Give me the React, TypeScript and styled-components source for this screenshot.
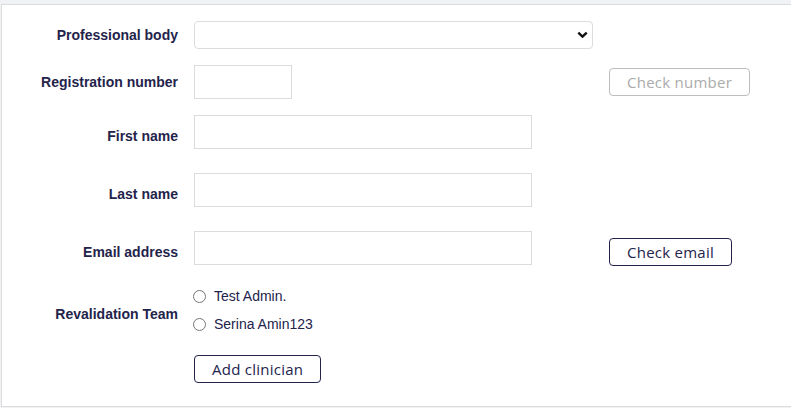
import React from "react";
import styled, { createGlobalStyle } from "styled-components";

const Global = createGlobalStyle`
  html, body { margin: 0; padding: 0; background: #f0f2f5; }
  body { font-family: "Liberation Sans", Arial, sans-serif; }
`;

const Card = styled.div`
  margin: 4px 0 0 1px;
  width: 820px;
  height: 403px;
  box-sizing: border-box;
  background: #fff;
  border: 1px solid #dcdcdc;
  padding: 16px 0 0 0;
`;

const Form = styled.div`
  display: grid;
  grid-template-columns: 176px 399px auto;
  column-gap: 16px;
  row-gap: 16px;
  align-items: center;
`;

const Label = styled.label`
  text-align: right;
  font-weight: bold;
  font-size: 14px;
  color: #23234b;
  line-height: 16px;
`;

const Cell = styled.div<{ $pad?: number }>`
  display: flex;
  align-items: flex-start;
  padding-bottom: ${(p) => p.$pad ?? 0}px;
`;

const SelectWrap = styled.div`
  position: relative;
  width: 399px;
  height: 28px;
`;

const Select = styled.select`
  appearance: none;
  width: 100%;
  height: 28px;
  box-sizing: border-box;
  border: 1px solid #dcdcdc;
  border-radius: 4px;
  background: #fff;
  font-family: "Liberation Sans", Arial, sans-serif;
  font-size: 14px;
  outline: none;
`;

const Chevron = styled.svg`
  position: absolute;
  right: 5px;
  top: 10px;
  pointer-events: none;
`;

const Input = styled.input<{ $w: number }>`
  width: ${(p) => p.$w}px;
  height: 34px;
  box-sizing: border-box;
  border: 1px solid #dcdcdc;
  border-radius: 0;
  background: #fff;
  font-family: "Liberation Sans", Arial, sans-serif;
  font-size: 14px;
  outline: none;
  margin: 0;
`;

const Button = styled.button<{ $disabled?: boolean }>`
  height: 28px;
  box-sizing: border-box;
  padding: 0 17px;
  background: #fff;
  border: 1px solid ${(p) => (p.$disabled ? "#bdbdbd" : "#23234b")};
  color: ${(p) => (p.$disabled ? "#ababab" : "#23234b")};
  border-radius: 4px;
  font-family: "Open Sans", sans-serif;
  font-weight: 500;
  font-size: 15px;
  letter-spacing: 0.25px;
  justify-self: start;
  cursor: pointer;
`;

const Empty = styled.div``;

const RadioGroup = styled.div`
  display: flex;
  flex-direction: column;
  gap: 14px;
  padding-bottom: 8px;
`;

const RadioItem = styled.label`
  display: flex;
  align-items: center;
  height: 14px;
  font-size: 14px;
  color: #23234b;
`;

const Radio = styled.input`
  width: 13px;
  height: 13px;
  margin: 0 8px 0 -1px;
`;

export default function App() {
  return (
    <>
      <Global />
      <Card>
        <Form>
          <Label>Professional body</Label>
          <SelectWrap>
            <Select defaultValue="">
              <option value=""></option>
            </Select>
            <Chevron width="11" height="8" viewBox="0 0 11 8">
              <path d="M1.3 1.6 L5.5 5.6 L9.7 1.6" stroke="#111" strokeWidth="2.4" fill="none" />
            </Chevron>
          </SelectWrap>
          <Empty />

          <Label>Registration number</Label>
          <Cell>
            <Input $w={98} />
          </Cell>
          <Button $disabled>Check number</Button>

          <Label>First name</Label>
          <Cell $pad={8}>
            <Input $w={338} />
          </Cell>
          <Empty />

          <Label>Last name</Label>
          <Cell $pad={8}>
            <Input $w={338} />
          </Cell>
          <Empty />

          <Label>Email address</Label>
          <Cell $pad={8}>
            <Input $w={338} />
          </Cell>
          <Button>Check email</Button>

          <Label>Revalidation Team</Label>
          <RadioGroup>
            <RadioItem>
              <Radio type="radio" name="team" />
              Test Admin.
            </RadioItem>
            <RadioItem>
              <Radio type="radio" name="team" />
              Serina Amin123
            </RadioItem>
          </RadioGroup>
          <Empty />

          <Empty />
          <Button>Add clinician</Button>
          <Empty />
        </Form>
      </Card>
    </>
  );
}
